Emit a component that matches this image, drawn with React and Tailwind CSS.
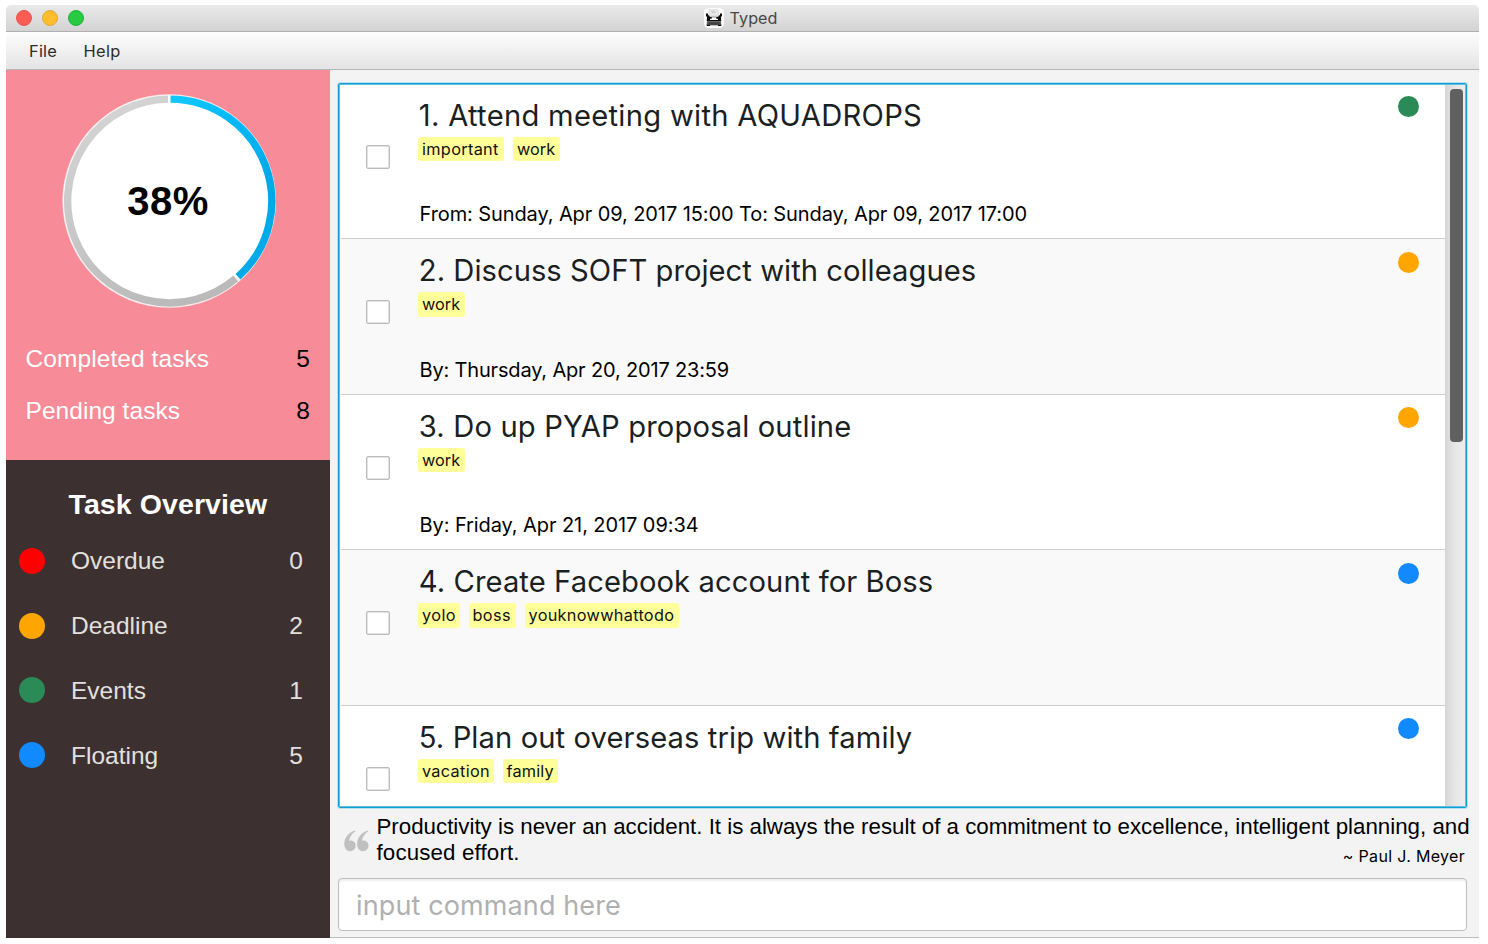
const TASKS = [
  {
    title: "1. Attend meeting with AQUADROPS",
    spacing: "tracking-[0.28px]",
    tags: [
      { name: "important", style: "w-[86px] tracking-[0.32px]" },
      { name: "work", style: "w-[47px] tracking-[0px]" },
    ],
    date: "From: Sunday, Apr 09, 2017 15:00 To: Sunday, Apr 09, 2017 17:00",
    dateSpacing: "tracking-[-0.095px]",
    dot: "bg-[#2a8b57]",
  },
  {
    title: "2. Discuss SOFT project with colleagues",
    spacing: "tracking-[0.03px]",
    tags: [{ name: "work", style: "w-[47px] tracking-[0px]" }],
    date: "By: Thursday, Apr 20, 2017 23:59",
    dateSpacing: "tracking-[-0.17px]",
    dot: "bg-[#ffa500]",
  },
  {
    title: "3. Do up PYAP proposal outline",
    spacing: "tracking-[0.14px]",
    tags: [{ name: "work", style: "w-[47px] tracking-[0px]" }],
    date: "By: Friday, Apr 21, 2017 09:34",
    dateSpacing: "tracking-[-0.08px]",
    dot: "bg-[#ffa500]",
  },
  {
    title: "4. Create Facebook account for Boss",
    spacing: "tracking-[0.08px]",
    tags: [
      { name: "yolo", style: "w-[41.5px] tracking-[0.4px]" },
      { name: "boss", style: "w-[47px] tracking-[0.35px]" },
      { name: "youknowwhattodo", style: "w-[154px] tracking-[0.3px]" },
    ],
    date: "",
    dateSpacing: "",
    dot: "bg-[#1189ff]",
  },
  {
    title: "5. Plan out overseas trip with family",
    spacing: "tracking-[0.09px]",
    tags: [
      { name: "vacation", style: "w-[75.5px] tracking-[0.3px]" },
      { name: "family", style: "w-[55px] tracking-[0.15px]" },
    ],
    date: "",
    dateSpacing: "",
    dot: "bg-[#1189ff]",
  },
];

const OVERVIEW = [
  { label: "Overdue", count: 0, dot: "bg-[#ff0000]" },
  { label: "Deadline", count: 2, dot: "bg-[#ffa500]" },
  { label: "Events", count: 1, dot: "bg-[#2a8b57]" },
  { label: "Floating", count: 5, dot: "bg-[#1189ff]" },
];

function TypewriterIcon() {
  return (
    <svg width="20" height="20" viewBox="0 0 20 20">
      <rect width="20" height="20" rx="4.5" fill="#fcfcfc" />
      <path d="M5.200 1.500h8.600l.8 6h-10z" fill="#e9e9e9" stroke="#d2d2d2" strokeWidth=".5" />
      <path d="M7 3.200h4M8 4.600h4" stroke="#b5b5b5" strokeWidth=".6" />
      <path d="M2 5.600h2v1.600h.9l.9 1.600h8.400l.9-1.600h.9V5.600h2v3h-1.100l.4 4.600H2.700l.4-4.600H2z" fill="#0c0c0c" />
      <path d="M6 10.800h1.700V9.300h4.600v1.500H14v1.100H6z" fill="#fff" />
      <path d="M3 13.200h14l.3 3.600H2.700z" fill="#5a5a5a" />
      <path d="M4.500 14.300h11M4.500 15.600h11" stroke="#303030" strokeWidth=".6" />
      <path d="M2.700 16.400h14.600v1.600H14v-.8H6v.8H2.700z" fill="#0c0c0c" />
    </svg>
  );
}

function TitleBar() {
  return (
    <header className="flex h-[27px] shrink-0 items-center rounded-tl-[5px] rounded-tr-[5px] border-b border-[#b0b0b0] bg-linear-to-b from-[#eaeaea] to-[#d3d3d3]">
      <div className="flex w-[697.5px] gap-[10px] pl-[10px]">
        <span className="size-4 rounded-full border border-[#e9544e] bg-[#ff5c56]" />
        <span className="size-4 rounded-full border border-[#e5a935] bg-[#ffbd2e]" />
        <span className="size-4 rounded-full border border-[#1fb436] bg-[#27ca40]" />
      </div>
      <TypewriterIcon />
      <span className="ml-[6px] text-[16.2px] leading-5 tracking-[0.05px] text-[#474747]">Typed</span>
    </header>
  );
}

function MenuBar() {
  return (
    <nav className="flex h-[37.5px] shrink-0 border-b border-[#b8b8b8] bg-linear-to-b from-[#fdfdfd] to-[#e4e4e4] pt-[9px] pl-[23px] text-[16.4px] leading-5 text-[#2c2c2c]">
      <span className="w-[54.5px] tracking-[0.2px]">File</span>
      <span className="tracking-[0.35px]">Help</span>
    </nav>
  );
}

function ProgressRing() {
  return (
    <div className="ml-[55px] grid size-[216px] place-items-center">
      <svg className="col-start-1 row-start-1" width="216" height="216" viewBox="-108 -108 216 216">
        <defs>
          <linearGradient id="done" gradientUnits="userSpaceOnUse" x1="0" y1="-105" x2="70" y2="0">
            <stop offset="0" stopColor="#16c8ff" />
            <stop offset=".4" stopColor="#00bafa" />
            <stop offset="1" stopColor="#00a9e8" />
          </linearGradient>
          <linearGradient id="rest" gradientUnits="userSpaceOnUse" x1="-60" y1="-90" x2="30" y2="105">
            <stop offset="0" stopColor="#d3d3d3" />
            <stop offset="1" stopColor="#b9b9b9" />
          </linearGradient>
        </defs>
        <circle cx=".2" r="106.8" fill="#fbe9eb" />
        <circle cx=".2" r="105.8" fill="#fff" />
        <path d="M1.5 -101.9A101.9 101.9 0 0 1 69 75.8" fill="none" stroke="url(#done)" strokeWidth="7.4" />
        <path d="M66.8 77.4A101.9 101.9 0 1 1 -1 -101.9" fill="none" stroke="url(#rest)" strokeWidth="7.4" />
      </svg>
      <strong className="col-start-1 row-start-1 pr-[2px] text-[40px] leading-10 tracking-[0.4px] text-black">
        38%
      </strong>
    </div>
  );
}

function Sidebar() {
  return (
    <aside className="flex w-[324px] shrink-0 flex-col font-['Liberation_Sans',sans-serif] text-[24.5px] leading-7">
      <section className="h-[390.5px] shrink-0 bg-[#f78c98] pt-[23.5px] text-white">
        <ProgressRing />
        <div className="mt-9 flex justify-between pr-5 pl-[19.5px]">
          <span className="tracking-[0.08px]">Completed tasks</span>
          <span className="text-black">5</span>
        </div>
        <div className="mt-6 flex justify-between pr-5 pl-[19.5px]">
          <span className="tracking-[0.05px]">Pending tasks</span>
          <span className="text-black">8</span>
        </div>
      </section>
      <section className="grow bg-[#3c3130] pt-[28px] text-[#e3e0df]">
        <h2 className="pl-[62.5px] text-[28.5px] leading-8 font-bold tracking-[0.1px] text-white">Task Overview</h2>
        <ul className="mt-[8.5px]">
          {OVERVIEW.map((item) => (
            <li key={item.label} className="flex h-[64.8px] items-center pr-[27px] pl-[13px]">
              <span className={`size-[26px] rounded-full ${item.dot}`} />
              <span className="ml-[26px] grow pt-[1px]">{item.label}</span>
              <span className="pt-[1px]">{item.count}</span>
            </li>
          ))}
        </ul>
      </section>
    </aside>
  );
}

function TaskRow({ task, index }) {
  const first = index === 0;
  return (
    <li
      className={`flex shrink-0 pl-[25px] ${first ? "h-[153px] pt-[11px]" : "h-[155.5px] border-t border-[#cfcfcf] pt-[12.5px]"} ${
        index % 2 ? "bg-[#f9f9f9]" : "bg-white"
      }`}
    >
      <span className="mt-[48.5px] size-6 rounded-[2px] border-[1.5px] border-[#bcbcbc] bg-white shadow-[inset_0_0_0_0.5px_#c8c8c8]" />
      <div className="ml-7 grow">
        <h3 className={`pt-[1.8px] pl-[0.8px] text-[29.2px] leading-9 whitespace-nowrap text-[#1b1f1f] ${task.spacing}`}>
          {task.title}
        </h3>
        <div className="mt-[2.9px] flex gap-[9px]">
          {task.tags.map((tag) => (
            <span
              key={tag.name}
              className={`h-[24.5px] rounded-[3px] bg-[#ffff99] pl-1 text-[16.3px] leading-[24px] whitespace-nowrap text-[#111] ${tag.style}`}
            >
              {tag.name}
            </span>
          ))}
        </div>
        <p className={`mt-[41.3px] pl-[1.5px] text-[20px] leading-6 whitespace-nowrap text-black ${task.dateSpacing}`}>{task.date}</p>
      </div>
      <span className={`mt-[0.3px] mr-[25.5px] size-[21px] rounded-full ${task.dot}`} />
    </li>
  );
}

function TaskList() {
  return (
    <div className="flex h-[725px] shrink-0 overflow-hidden rounded-[2px] border border-[#0f9fd6] shadow-[0_0_0_1px_#b9e0ef]">
      <div className="flex grow overflow-hidden border border-[#5fbfe2]">
        <ul className="flex grow flex-col overflow-hidden bg-white pl-px">
          {TASKS.map((task, i) => (
            <TaskRow key={task.title} task={task} index={i} />
          ))}
        </ul>
        <div className="w-[20.5px] shrink-0 bg-linear-to-r from-[#d6d6d6] via-[#e6e6e6] to-[#ededed] pt-[4px] pl-[5px]">
          <div className="h-[352.5px] w-[13.5px] rounded-[4px] bg-[#606060]" />
        </div>
      </div>
    </div>
  );
}

function Quote() {
  return (
    <div className="flex h-[70px] shrink-0 pt-[5.5px] pl-[6px]">
      <svg className="mt-[16px] shrink-0" width="25" height="22" viewBox="0 0 25 22">
        <path
          id="mark"
          d="M11 .4C5 2.2 .3 7.4 .3 13.8c0 4.6 2.4 7.4 5.800 7.400 3.200 0 5.600-2.300 5.600-5.400s-2.200-5.200-5-5.200c-.6 0-1.100.1-1.600.3C5.600 7.500 7.600 3.600 11.400 1.200z"
          fill="#c0c0c0"
        />
        <use href="#mark" x="12.8" />
      </svg>
      <div className="ml-[7.5px] font-['Liberation_Sans',sans-serif] text-[22.3px] leading-[26px] whitespace-nowrap text-black">
        <p>
          Productivity is never an accident. It is always the result of a commitment to excellence, intelligent planning, and
        </p>
        <div className="flex justify-between">
          <p className="tracking-[0.15px]">focused effort.</p>
          <p className="pt-[6px] pr-[4.5px] font-[Inter,sans-serif] text-[16px] leading-5 tracking-[0.33px]">~ Paul J. Meyer</p>
        </div>
      </div>
    </div>
  );
}

export default function App() {
  return (
    <div className="h-[944px] w-[1488px] overflow-hidden bg-white pt-[5px] pl-[6px] font-[Inter,sans-serif]">
      <div className="flex h-[933px] w-[1473px] flex-col">
        <TitleBar />
        <MenuBar />
        <div className="flex min-h-0 grow">
          <Sidebar />
          <main className="flex w-[1149px] flex-col border-b border-[#bdbdbd] bg-[#f3f3f3] pt-[13.5px] pl-2">
            <div className="w-[1129px]">
              <TaskList />
            </div>
            <Quote />
            <div className="h-[53px] w-[1129px] shrink-0 rounded-[4px] border-[1.5px] border-[#bdbdbd] bg-white pt-[10.5px] pl-[17px] text-[27px] leading-8 tracking-[0.12px] text-[#b0b0b0] shadow-[inset_0_2px_2px_#eeeeee]">
              input command here
            </div>
          </main>
        </div>
      </div>
    </div>
  );
}
